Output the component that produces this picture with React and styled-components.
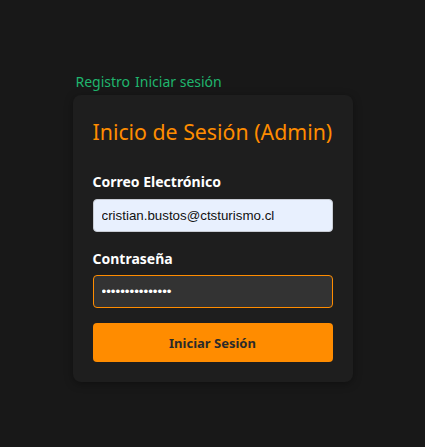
import React from "react";
import styled, { createGlobalStyle } from "styled-components";

const Global = createGlobalStyle`
  html, body { margin: 0; padding: 0; background: #181818; }
  body { font-family: "Noto Sans", "Open Sans", sans-serif; }
  * { box-sizing: border-box; }
`;

const Page = styled.div`
  min-height: 447px;
  display: flex;
  justify-content: center;
  padding-top: 72px;
`;

const Column = styled.div`
  width: 280px;
  display: flex;
  flex-direction: column;
  gap: 3px;
`;

const Nav = styled.nav`
  display: flex;
  gap: 5px;
  padding-left: 3px;
`;

const NavLink = styled.a`
  color: #1fb56d;
  font-size: 14px;
  line-height: 20px;
  text-decoration: none;
`;

const Card = styled.div`
  background: #1e1e1e;
  border-radius: 8px;
  padding: 20px;
  box-shadow: 0 2px 8px rgba(0, 0, 0, 0.35);
  display: flex;
  flex-direction: column;
`;

const Title = styled.h2`
  margin: 2px 0 25px;
  color: #ff8c00;
  font-size: 21.3px;
  font-weight: 400;
  line-height: 30px;
  white-space: nowrap;
`;

const Label = styled.label`
  color: #ffffff;
  font-size: 14px;
  font-weight: 700;
  line-height: 20px;
  margin-bottom: ${(p) => p.$mb}px;
`;

const Input = styled.input`
  height: 33px;
  width: 100%;
  border-radius: 4px;
  padding: 0 8px;
  font-family: "Liberation Sans", Arial, sans-serif;
  font-size: 13.33px;
  outline: none;
  caret-color: #ffffff;
  border: 1px solid ${(p) => (p.$focus ? "#ff8c00" : "#c8ccd4")};
  background: ${(p) => (p.$focus ? "#333333" : "#e8f0fe")};
  color: ${(p) => (p.$focus ? "#ffffff" : "#111111")};
  margin-bottom: ${(p) => p.$mb}px;
`;

const Button = styled.button`
  height: 39px;
  border: none;
  border-radius: 4px;
  background: #ff8c00;
  color: #2a2a2a;
  font-family: "Noto Sans", sans-serif;
  font-weight: 700;
  font-size: 13px;
`;

export default function App() {
  return (
    <>
      <Global />
      <Page>
        <Column>
          <Nav>
            <NavLink href="#">Registro</NavLink>
            <NavLink href="#">Iniciar sesión</NavLink>
          </Nav>
          <Card>
            <Title>Inicio de Sesión (Admin)</Title>
            <Label $mb={7}>Correo Electrónico</Label>
            <Input $mb={17} defaultValue="cristian.bustos@ctsturismo.cl" />
            <Label $mb={6}>Contraseña</Label>
            <Input $focus $mb={15} type="password" defaultValue="cristianbustos1" autoFocus />
            <Button>Iniciar Sesión</Button>
          </Card>
        </Column>
      </Page>
    </>
  );
}
